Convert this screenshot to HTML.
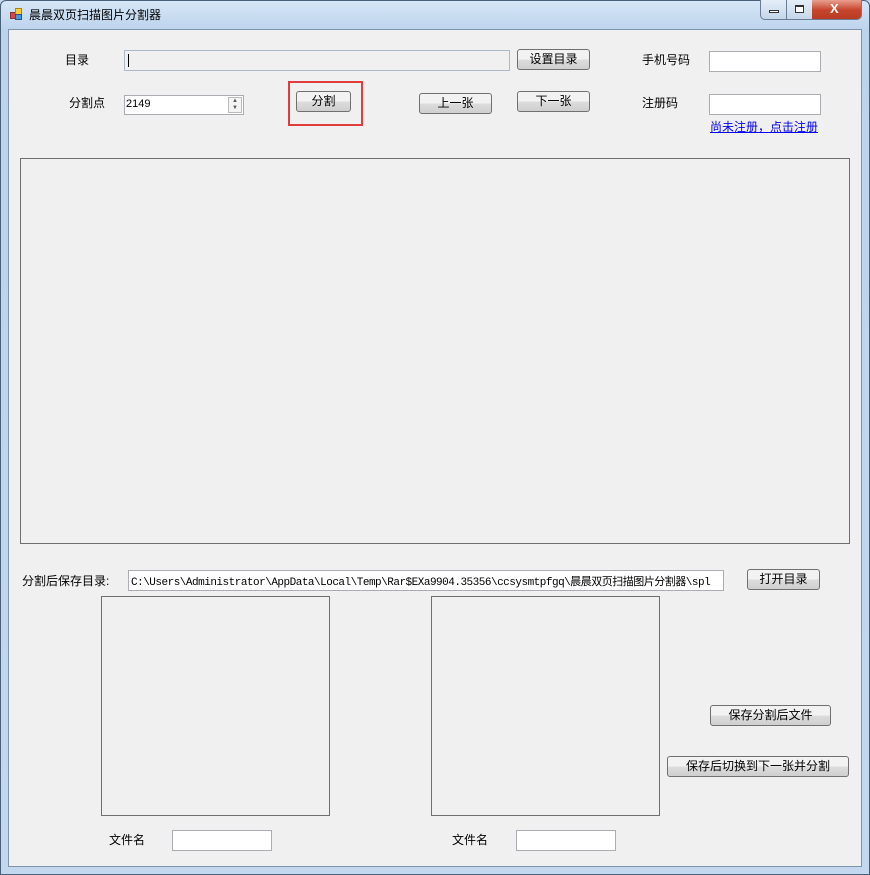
<!DOCTYPE html>
<html><head><meta charset="utf-8"><style>
*{margin:0;padding:0;box-sizing:border-box}
body{width:870px;height:875px;overflow:hidden;background:#c6dbf0;font-family:"Liberation Sans","Noto Sans CJK SC",sans-serif;font-size:12px;color:#000;position:relative}
.a{position:absolute}
.frame{left:0;top:0;width:870px;height:875px;border:1px solid #4a5f78;border-radius:6px 6px 0 0;background:linear-gradient(#d6e6f7,#bcd3ec 30px,#c3d8ef)}
.client{left:8px;top:29px;width:854px;height:838px;background:#f0f0f0;border:1px solid #7f93ad}
.btn{position:absolute;height:21px;border:1px solid #707070;border-radius:3px;background:linear-gradient(#f2f2f2 50%,#dddddd 50%,#cfcfcf);text-align:center;line-height:19px;font-size:12px}
.tb{position:absolute;background:#fff;border:1px solid #abadb3;border-top-color:#abadb3;height:21px}
.box{position:absolute;border:1px solid #6f6f6f}
.lbl{position:absolute;font-size:12px}
</style></head><body>
<div class="a frame"></div>
<div class="a" style="left:10px;top:8px;width:12px;height:12px">
<div class="a" style="left:0;top:4px;width:6px;height:7px;background:#d44;border:1px solid #833"></div>
<div class="a" style="left:5px;top:0;width:7px;height:7px;background:#fc3;border:1px solid #a80"></div>
<div class="a" style="left:5px;top:6px;width:7px;height:6px;background:#49d;border:1px solid #258"></div>
</div>
<div class="lbl" style="left:29px;top:6px">晨晨双页扫描图片分割器</div>
<div class="a" style="left:760px;top:0;width:102px;height:20px;border:1px solid #6b7d94;border-top:none;border-radius:0 0 5px 5px;overflow:hidden;background:linear-gradient(#e4eef9,#c5d6ea)">
<div class="a" style="left:25px;top:0;width:1px;height:20px;background:#6b7d94"></div>
<div class="a" style="left:51px;top:0;width:51px;height:20px;background:linear-gradient(#e8a090,#c7452d 50%,#b83a22)"></div>
<div class="a" style="left:8px;top:10px;width:10px;height:3px;border:1px solid #333;background:#fff"></div>
<div class="a" style="left:34px;top:5px;width:9px;height:8px;border:1px solid #333;border-top-width:2px;background:#fff"></div>
<div class="a" style="left:69px;top:1px;color:#fff;font-weight:bold;font-size:13px">X</div>
</div>
<div class="a client"></div>

<div class="lbl" style="left:65px;top:51px">目录</div>
<div class="tb" style="left:124px;top:50px;width:386px;height:21px;background:#f0f0f0;border-color:#abb9c9"><div class="a" style="left:3px;top:3px;width:1px;height:13px;background:#000"></div></div>
<div class="btn" style="left:517px;top:49px;width:73px">设置目录</div>
<div class="lbl" style="left:642px;top:51px">手机号码</div>
<div class="tb" style="left:709px;top:51px;width:112px"></div>

<div class="lbl" style="left:69px;top:94px">分割点</div>
<div class="tb" style="left:124px;top:95px;width:120px;height:20px"><span class="a" style="left:1px;top:2px;font-size:11px">2149</span>
<div class="a" style="left:103px;top:1px;width:14px;height:16px;border:1px solid #bbb;background:#f4f4f4;font-size:6px;line-height:7px;text-align:center;color:#555">▲<br>▼</div></div>
<div class="a" style="left:288px;top:81px;width:75px;height:45px;border:2px solid #e03c3c"></div>
<div class="btn" style="left:296px;top:91px;width:55px">分割</div>
<div class="btn" style="left:419px;top:93px;width:73px">上一张</div>
<div class="btn" style="left:517px;top:91px;width:73px">下一张</div>
<div class="lbl" style="left:642px;top:94px">注册码</div>
<div class="tb" style="left:709px;top:94px;width:112px"></div>
<div class="lbl" style="left:710px;top:118px;color:#0000ee;text-decoration:underline">尚未注册，点击注册</div>

<div class="box" style="left:20px;top:158px;width:830px;height:386px"></div>

<div class="lbl" style="left:22px;top:572px">分割后保存目录:</div>
<div class="tb" style="left:128px;top:570px;width:596px"><span class="a" style="left:2px;top:2px;font-family:'Liberation Mono','Noto Sans CJK SC',monospace;font-size:11px;white-space:nowrap;letter-spacing:-0.5px">C:\Users\Administrator\AppData\Local\Temp\Rar$EXa9904.35356\ccsysmtpfgq\晨晨双页扫描图片分割器\spl</span></div>
<div class="btn" style="left:747px;top:569px;width:73px">打开目录</div>

<div class="box" style="left:101px;top:596px;width:229px;height:220px"></div>
<div class="box" style="left:431px;top:596px;width:229px;height:220px"></div>
<div class="btn" style="left:710px;top:705px;width:121px">保存分割后文件</div>
<div class="btn" style="left:667px;top:756px;width:182px">保存后切换到下一张并分割</div>

<div class="lbl" style="left:109px;top:831px">文件名</div>
<div class="tb" style="left:172px;top:830px;width:100px"></div>
<div class="lbl" style="left:452px;top:831px">文件名</div>
<div class="tb" style="left:516px;top:830px;width:100px"></div>
</body></html>
